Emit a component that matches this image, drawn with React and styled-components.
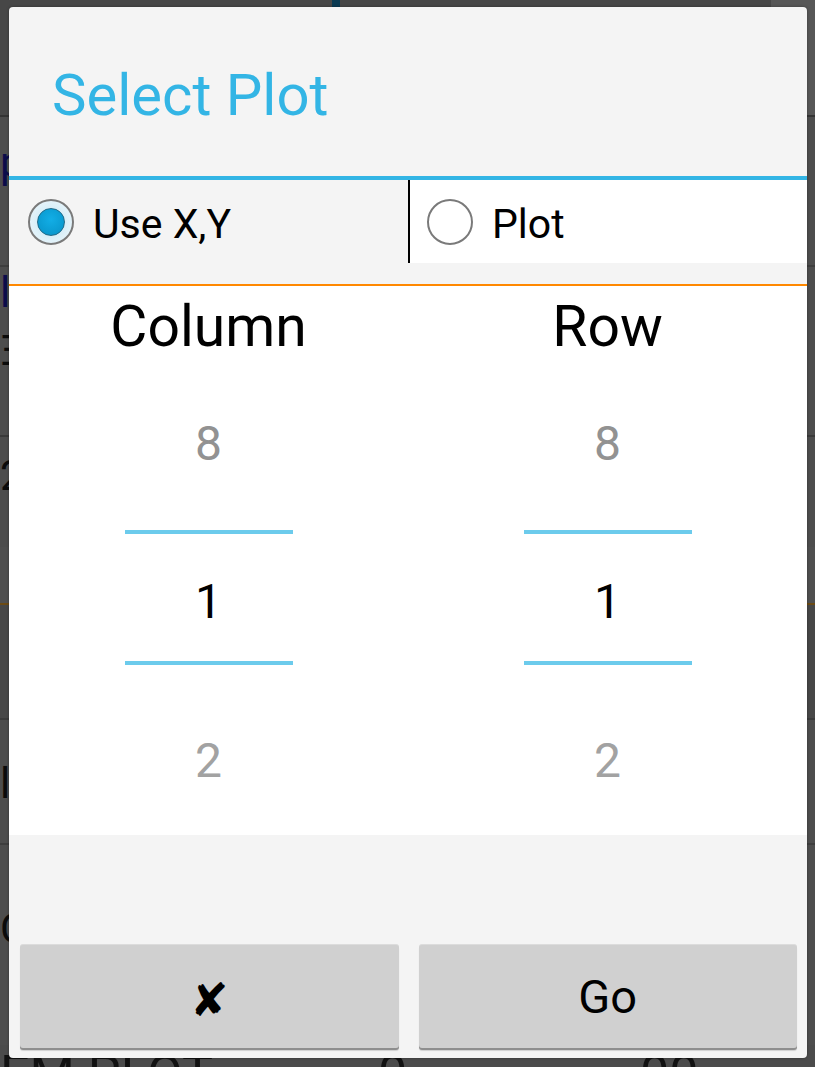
import React from 'react';
import styled, { createGlobalStyle } from 'styled-components';

const GlobalStyle = createGlobalStyle`
  html, body {
    margin: 0;
    padding: 0;
    background: #4b4b4b;
  }
  body {
    font-family: Roboto, "Noto Sans", sans-serif;
  }
`;

const Screen = styled.div`
  position: relative;
  width: 815px;
  height: 1067px;
  overflow: hidden;
  background: #4b4b4b;
`;

/* dimmed app page behind the dialog */

const BehindPage = styled.div`
  display: flex;
  flex-direction: column;
  height: 100%;
`;

const TopStrip = styled.div`
  display: flex;
  flex: none;
  height: 115px;
  background: #474747;
  border-bottom: 2px solid #343434;
`;

const TopSpacer = styled.div`
  width: ${({ $w }) => ($w ? `${$w}px` : 'auto')};
  flex: ${({ $w }) => ($w ? 'none' : '1')};
`;

const TopMarker = styled.div`
  width: 8px;
  background: #0b3a52;
`;

const TopCorner = styled.div`
  width: 44px;
  background: #575757;
`;

const BehindRow = styled.div`
  flex: none;
  height: ${({ $h }) => $h}px;
  padding-top: ${({ $pad }) => $pad || 0}px;
  box-sizing: border-box;
  background: ${({ $bg }) => $bg || '#4d4d4d'};
  border-bottom: ${({ $line }) => ($line ? `2px solid ${$line}` : 'none')};
  font-size: 42px;
  line-height: 48px;
  color: ${({ $ink }) => $ink || '#0b0b0b'};
  white-space: nowrap;
`;

const BottomText = styled.div`
  flex: none;
  display: grid;
  grid-template-columns: 378px 262px auto;
  padding-top: 2px;
  font-size: 52px;
  line-height: 56px;
  color: #111;
  white-space: nowrap;
`;

/* dialog */

const Overlay = styled.div`
  position: absolute;
  inset: 0;
  display: flex;
  padding: 7px 8px 9px 9px;
`;

const Dialog = styled.div`
  flex: 1;
  display: flex;
  flex-direction: column;
  background: #f4f4f4;
  border-radius: 4px;
  overflow: hidden;
  box-shadow: 0 0 3px rgba(0, 0, 0, 0.35);
`;

const TitleBar = styled.div`
  height: 169px;
  padding: 54px 0 0 43px;
  box-sizing: border-box;
`;

const Title = styled.h1`
  margin: 0;
  font-family: Roboto, sans-serif;
  font-weight: 400;
  font-size: 58px;
  line-height: 68px;
  color: #33b5e5;
`;

const TitleRule = styled.div`
  height: 4px;
  background: #33b5e5;
`;

const RadioGroup = styled.div`
  display: flex;
  align-items: flex-start;
  height: 104px;
`;

const RadioOption = styled.label`
  flex: 1;
  display: flex;
  align-items: center;
  gap: ${({ $gap }) => $gap}px;
  height: 83px;
  padding-left: ${({ $pad }) => $pad}px;
  background: ${({ $bg }) => $bg};
  font-size: 41px;
  color: #000;
  cursor: pointer;
`;

const RadioLabel = styled.span`
  position: relative;
  top: 2px;
`;

const RadioDivider = styled.div`
  width: 2px;
  height: 83px;
  background: #000;
`;

const RadioCircle = styled.span`
  width: 46px;
  height: 46px;
  box-sizing: border-box;
  border-radius: 50%;
  border: 2px solid #7a7a7a;
  display: flex;
  align-items: center;
  justify-content: center;
  background: ${({ $on }) =>
    $on ? 'radial-gradient(circle, #bfe3f3 0%, #dff1f9 60%, #eef6fa 100%)' : 'transparent'};
  flex: none;
`;

const RadioDot = styled.span`
  width: 28px;
  height: 28px;
  box-sizing: border-box;
  border-radius: 50%;
  background: radial-gradient(circle at 50% 40%, #12aee6 0%, #0a9ad0 70%, #0a7fae 100%);
  border: 1.5px solid #206a88;
`;

const OrangeRule = styled.div`
  height: 2px;
  background: #ff8800;
`;

const PickerArea = styled.div`
  display: flex;
  height: 549px;
  background: #fff;
`;

const PickerColumn = styled.div`
  flex: 1;
  display: flex;
  flex-direction: column;
  align-items: center;
`;

const PickerLabel = styled.div`
  margin-top: 9px;
  font-size: 57px;
  line-height: 64px;
  color: #000;
`;

const Slot = styled.div`
  width: 168px;
  height: ${({ $h }) => $h}px;
  padding-top: ${({ $pad }) => $pad}px;
  box-sizing: border-box;
  border-top: ${({ $framed }) => ($framed ? '4px solid #6ccbec' : 'none')};
  border-bottom: ${({ $framed }) => ($framed ? '4px solid #6ccbec' : 'none')};
  text-align: center;
  font-size: 48px;
  line-height: 48px;
  color: ${({ $color }) => $color};
`;

const Footer = styled.div`
  flex: 1;
  display: flex;
  align-items: flex-end;
  gap: 20px;
  padding: 0 10px 10px 11px;
`;

const Button = styled.button`
  flex: 1;
  height: 104px;
  border: none;
  border-top: 1px solid #dcdcdc;
  border-radius: 3px;
  background: #d0d0d0;
  box-shadow: 0 2px 0 #8e8e8e, 0 3px 1px rgba(0, 0, 0, 0.15);
  font-family: Roboto, sans-serif;
  font-size: 47px;
  color: #000;
  padding: 0;
  cursor: pointer;
`;

const CrossGlyph = styled.span`
  font-family: "DejaVu Sans", sans-serif;
  font-size: 46px;
  position: relative;
  top: 3px;
`;

const Radio = ({ label, checked, pad, gap, bg }) => (
  <RadioOption $pad={pad} $gap={gap} $bg={bg}>
    <RadioCircle $on={checked}>{checked && <RadioDot />}</RadioCircle>
    <RadioLabel>{label}</RadioLabel>
  </RadioOption>
);

const NumberPicker = ({ label }) => (
  <PickerColumn>
    <PickerLabel>{label}</PickerLabel>
    <Slot $h={171} $pad={61} $color="#929292">8</Slot>
    <Slot $h={135} $pad={44} $color="#000" $framed>1</Slot>
    <Slot $h={170} $pad={72} $color="#a2a2a2">2</Slot>
  </PickerColumn>
);

export default function App() {
  return (
    <>
      <GlobalStyle />
      <Screen>
        <BehindPage>
          <TopStrip>
            <TopSpacer $w={332} />
            <TopMarker />
            <TopSpacer />
            <TopCorner />
          </TopStrip>
          <BehindRow $h={150} $pad={22} $ink="#0c0c4a" $line="#3e3e3e">p</BehindRow>
          <BehindRow $h={60} $pad={2} $ink="#0c0c4a">l</BehindRow>
          <BehindRow $h={110} $pad={0} $line="#3a3a3a">Ξ</BehindRow>
          <BehindRow $h={110} $pad={15}>2</BehindRow>
          <BehindRow $h={58} $bg="#4f4f4f" $line="#6b4a14" />
          <BehindRow $h={115} $bg="#474747" $line="#3b3b3b" />
          <BehindRow $h={125} $pad={40} $line="#3e3e3e">l</BehindRow>
          <BehindRow $h={200} $pad={60}>C</BehindRow>
          <BottomText>
            <span>EM PLOT</span>
            <span>0</span>
            <span>00</span>
          </BottomText>
        </BehindPage>

        <Overlay>
          <Dialog>
            <TitleBar>
              <Title>Select Plot</Title>
            </TitleBar>
            <TitleRule />
            <RadioGroup>
              <Radio label="Use X,Y" checked pad={19} gap={19} bg="#f4f4f4" />
              <RadioDivider />
              <Radio label="Plot" pad={17} gap={19} bg="#ffffff" />
            </RadioGroup>
            <OrangeRule />
            <PickerArea>
              <NumberPicker label="Column" />
              <NumberPicker label="Row" />
            </PickerArea>
            <Footer>
              <Button aria-label="Cancel">
                <CrossGlyph>✘</CrossGlyph>
              </Button>
              <Button>Go</Button>
            </Footer>
          </Dialog>
        </Overlay>
      </Screen>
    </>
  );
}
